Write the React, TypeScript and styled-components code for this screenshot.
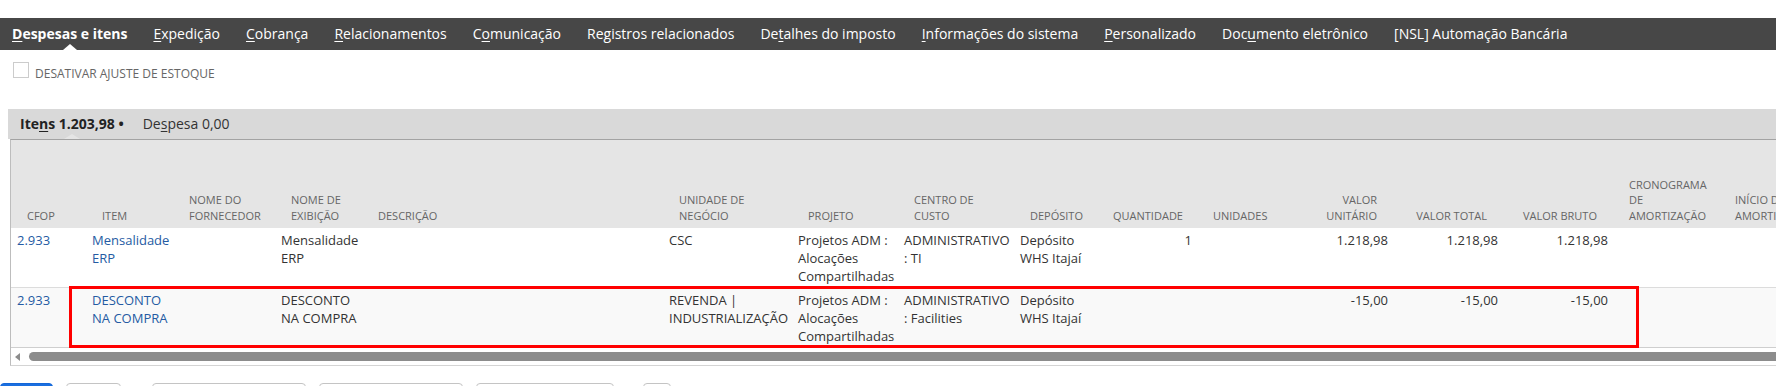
import React from 'react';
import styled, {createGlobalStyle} from 'styled-components';

const GlobalStyle = createGlobalStyle`
  html, body {
    margin: 0;
    padding: 0;
    background: #ffffff;
    overflow: hidden;
  }
  body {
    font-family: "Open Sans", "Noto Sans", Arial, sans-serif;
    color: #333333;
  }
  u {
    text-underline-offset: 2px;
  }
`

type ColumnType = {
    label: string
    width: number
    align: 'left' | 'right'
}

type CellType = {
    text: string
    link?: boolean
}

const columns: ColumnType[] = [
    {label: 'CFOP', width: 75, align: 'left'},
    {label: 'Item', width: 87, align: 'left'},
    {label: 'Nome do fornecedor', width: 102, align: 'left'},
    {label: 'Nome de exibição', width: 87, align: 'left'},
    {label: 'Descrição', width: 301, align: 'left'},
    {label: 'Unidade de negócio', width: 129, align: 'left'},
    {label: 'Projeto', width: 106, align: 'left'},
    {label: 'Centro de custo', width: 116, align: 'left'},
    {label: 'Depósito', width: 83, align: 'left'},
    {label: 'Quantidade', width: 100, align: 'right'},
    {label: 'Unidades', width: 93, align: 'left'},
    {label: 'Valor unitário', width: 103, align: 'right'},
    {label: 'Valor total', width: 110, align: 'right'},
    {label: 'Valor bruto', width: 110, align: 'right'},
    {label: 'Cronograma de amortização', width: 106, align: 'left'},
    {label: 'Início da amortização', width: 120, align: 'left'},
]

const rows: CellType[][] = [
    [
        {text: '2.933', link: true},
        {text: 'Mensalidade ERP', link: true},
        {text: ''},
        {text: 'Mensalidade ERP'},
        {text: ''},
        {text: 'CSC'},
        {text: 'Projetos ADM : Alocações Compartilhadas'},
        {text: 'ADMINISTRATIVO : TI'},
        {text: 'Depósito WHS Itajaí'},
        {text: '1'},
        {text: ''},
        {text: '1.218,98'},
        {text: '1.218,98'},
        {text: '1.218,98'},
        {text: ''},
        {text: ''},
    ],
    [
        {text: '2.933', link: true},
        {text: 'DESCONTO NA COMPRA', link: true},
        {text: ''},
        {text: 'DESCONTO NA COMPRA'},
        {text: ''},
        {text: 'REVENDA | INDUSTRIALIZAÇÃO'},
        {text: 'Projetos ADM : Alocações Compartilhadas'},
        {text: 'ADMINISTRATIVO : Facilities'},
        {text: 'Depósito WHS Itajaí'},
        {text: ''},
        {text: ''},
        {text: '-15,00'},
        {text: '-15,00'},
        {text: '-15,00'},
        {text: ''},
        {text: ''},
    ],
]

// [antes, letra sublinhada, depois]
const tabs: [string, string, string][] = [
    ['', 'D', 'espesas e itens'],
    ['', 'E', 'xpedição'],
    ['', 'C', 'obrança'],
    ['', 'R', 'elacionamentos'],
    ['C', 'o', 'municação'],
    ['Registros relacionados', '', ''],
    ['De', 't', 'alhes do imposto'],
    ['', 'I', 'nformações do sistema'],
    ['', 'P', 'ersonalizado'],
    ['Doc', 'u', 'mento eletrônico'],
    ['[NSL] Automação Bancária', '', ''],
]

const buttons = [
    {width: 53, gap: 0, primary: true},
    {width: 55, gap: 13, primary: false},
    {width: 154, gap: 31, primary: false},
    {width: 144, gap: 13, primary: false},
    {width: 138, gap: 13, primary: false},
    {width: 28, gap: 29, primary: false},
]

export default function App() {
    return (
        <Page>
            <GlobalStyle/>
            <TabBar>
                {tabs.map((t, i) => (
                    <Tab key={i} $active={i === 0}>
                        {t[0]}{t[1] && <u>{t[1]}</u>}{t[2]}
                    </Tab>
                ))}
            </TabBar>

            <CheckRow>
                <CheckBox/>
                <CheckLabel>Desativar ajuste de estoque</CheckLabel>
            </CheckRow>

            <SubTabBar>
                <SubTab $active>Ite<u>n</u>s 1.203,98 •</SubTab>
                <SubTab>De<u>s</u>pesa 0,00</SubTab>
            </SubTabBar>

            <GridBox>
                <Table>
                    <colgroup>
                        {columns.map((c, i) => <col key={i} style={{width: c.width}}/>)}
                    </colgroup>
                    <thead>
                    <tr>
                        {columns.map((c, i) => (
                            <HeadCell key={i} $align={c.align}>{c.label}</HeadCell>
                        ))}
                    </tr>
                    </thead>
                    <tbody>
                    {rows.map((r, ri) => (
                        <Row key={ri} $odd={ri % 2 === 1}>
                            {r.map((cell, ci) => (
                                <Cell key={ci} $align={columns[ci].align} $link={cell.link}>
                                    {cell.text}
                                </Cell>
                            ))}
                        </Row>
                    ))}
                    </tbody>
                </Table>
                <Highlight/>
                <ScrollBar>
                    <ScrollArrow/>
                    <ScrollThumb/>
                </ScrollBar>
            </GridBox>

            <ButtonRow>
                {buttons.map((b, i) => (
                    <Button key={i} $primary={b.primary} $width={b.width} $gap={b.gap}/>
                ))}
            </ButtonRow>
        </Page>
    );
}

const Page = styled.div`
  width: 1776px;
  padding-top: 18px;
`
const TabBar = styled.div`
  display: flex;
  align-items: center;
  gap: 26px;
  height: 32px;
  padding-left: 12px;
  background-color: #474747;
`
const Tab = styled.div<{ $active?: boolean }>`
  position: relative;
  height: 32px;
  line-height: 32px;
  font-size: 14px;
  color: #ffffff;
  white-space: nowrap;
  font-weight: ${props => props.$active ? 700 : 400};

  &::after {
    content: '';
    display: ${props => props.$active ? 'block' : 'none'};
    position: absolute;
    left: 50%;
    bottom: 0;
    margin-left: -7px;
    border-left: 7px solid transparent;
    border-right: 7px solid transparent;
    border-bottom: 6px solid #ffffff;
  }
`
const CheckRow = styled.div`
  display: flex;
  align-items: flex-start;
  gap: 6px;
  height: 20px;
  margin-top: 12px;
  padding-left: 13px;
`
const CheckBox = styled.div`
  width: 14px;
  height: 14px;
  border: 1px solid #cccccc;
  background: #ffffff;
`
const CheckLabel = styled.div`
  margin-top: 4px;
  font-size: 12px;
  line-height: 16px;
  color: #666666;
  text-transform: uppercase;
`
const SubTabBar = styled.div`
  display: flex;
  align-items: center;
  gap: 19px;
  height: 30px;
  margin: 27px 0 0 8px;
  padding-left: 12px;
  background-color: #d9d9d9;
`
const SubTab = styled.div<{ $active?: boolean }>`
  position: relative;
  height: 30px;
  line-height: 30px;
  font-size: 14px;
  white-space: nowrap;
  color: ${props => props.$active ? '#222222' : '#333333'};
  font-weight: ${props => props.$active ? 700 : 400};

  &::after {
    content: '';
    display: ${props => props.$active ? 'block' : 'none'};
    position: absolute;
    left: 44px;
    bottom: 0;
    border-left: 8px solid transparent;
    border-right: 8px solid transparent;
    border-bottom: 5px solid #e5e5e5;
  }
`
const GridBox = styled.div`
  position: relative;
  margin-left: 10px;
  overflow: hidden;
  border-top: 1px solid #a3a3a3;
  border-left: 1px solid #bdbdbd;
  border-bottom: 1px solid #d4d4d4;
`
const Table = styled.table`
  table-layout: fixed;
  width: 1828px;
  border-collapse: collapse;
  border-spacing: 0;
`
const HeadCell = styled.th<{ $align: 'left' | 'right' }>`
  height: 88px;
  padding: 0 16px 5px;
  box-sizing: border-box;
  vertical-align: bottom;
  background: #e5e5e5;
  font-size: 11px;
  line-height: 15.5px;
  font-weight: 400;
  color: #666666;
  text-transform: uppercase;
  text-align: ${props => props.$align};
`
const Row = styled.tr<{ $odd?: boolean }>`
  background: ${props => props.$odd ? '#f9f9f9' : '#ffffff'};
  border-top: ${props => props.$odd ? '1px solid #dcdcdc' : 'none'};
  border-bottom: ${props => props.$odd ? '1px solid #cfcfcf' : 'none'};
`
const Cell = styled.td<{ $align: 'left' | 'right', $link?: boolean }>`
  padding: 3px 5px 2px 6px;
  vertical-align: top;
  font-size: 13px;
  line-height: 18px;
  height: 54px;
  text-align: ${props => props.$align};
  color: ${props => props.$link ? '#255ba3' : '#333333'};
`
const Highlight = styled.div`
  position: absolute;
  left: 58px;
  top: 146px;
  width: 1570px;
  height: 62px;
  box-sizing: border-box;
  border: 3px solid #ff0000;
  pointer-events: none;
`
const ScrollBar = styled.div`
  display: flex;
  align-items: center;
  height: 17px;
  padding-left: 4px;
  background: #ffffff;
`
const ScrollArrow = styled.div`
  width: 0;
  height: 0;
  border-top: 4px solid transparent;
  border-bottom: 4px solid transparent;
  border-right: 5px solid #8c8c8c;
`
const ScrollThumb = styled.div`
  flex: 1;
  height: 9px;
  margin-left: 9px;
  border-radius: 5px 0 0 5px;
  background: #8c8c8c;
`
const ButtonRow = styled.div`
  display: flex;
  margin-top: 17px;
`
const Button = styled.div<{ $primary?: boolean, $width: number, $gap: number }>`
  width: ${props => props.$width}px;
  height: 28px;
  margin-left: ${props => props.$gap}px;
  box-sizing: border-box;
  border-radius: 4px;
  border: 1px solid ${props => props.$primary ? '#1467d8' : '#c4c4c4'};
  background: ${props => props.$primary ? '#1a6fe0' : '#ffffff'};
`
